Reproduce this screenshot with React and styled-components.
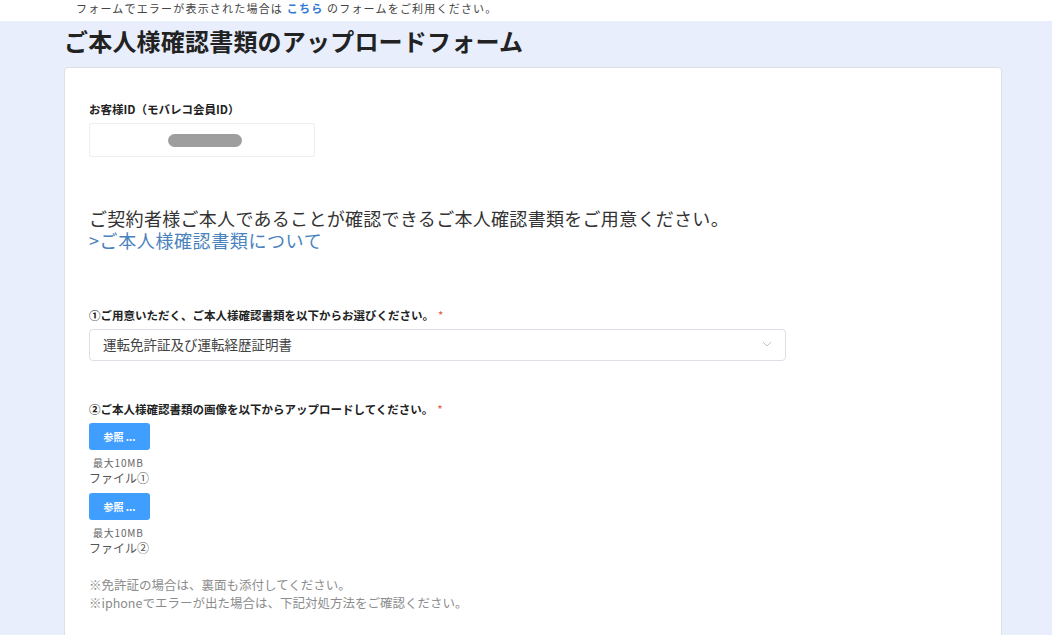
import styled, { createGlobalStyle } from "styled-components";

const GlobalStyle = createGlobalStyle`
  html, body {
    margin: 0;
    padding: 0;
    background: #e8eefc;
  }
  body {
    font-family: "Noto Sans CJK JP", "Noto Sans", sans-serif;
    color: #333;
  }
  * {
    box-sizing: border-box;
  }
`;

export default function App() {
  return (
    <>
      <GlobalStyle />
      <Notice>
        フォームでエラーが表示された場合は <a href="#">こちら</a> のフォームをご利用ください。
      </Notice>
      <Page>
        <Title>ご本人様確認書類のアップロードフォーム</Title>
        <Card>
          <Label>お客様ID（モバレコ会員ID）</Label>
          <IdBox>
            <Redacted />
          </IdBox>

          <Intro>
            <p>ご契約者様ご本人であることが確認できるご本人確認書類をご用意ください。</p>
            <a href="#">&gt;ご本人様確認書類について</a>
          </Intro>

          <Label $gap={56}>
            ①ご用意いただく、ご本人様確認書類を以下からお選びください。<Req>*</Req>
          </Label>
          <Select>
            <span>運転免許証及び運転経歴証明書</span>
            <svg width="10" height="6" viewBox="0 0 10 6">
              <path d="M1 1l4 4 4-4" fill="none" stroke="#c4c4c4" strokeWidth="1" />
            </svg>
          </Select>

          <Label $gap={40}>
            ②ご本人様確認書類の画像を以下からアップロードしてください。<Req>*</Req>
          </Label>
          {["ファイル①", "ファイル②"].map((name, i) => (
            <Upload key={name} $first={i === 0}>
              <Browse>参照 ...</Browse>
              <Size>最大10MB</Size>
              <FileName>{name}</FileName>
            </Upload>
          ))}

          <Notes>
            <p>※免許証の場合は、裏面も添付してください。</p>
            <p>※iphoneでエラーが出た場合は、下記対処方法をご確認ください。</p>
          </Notes>
        </Card>
      </Page>
    </>
  );
}

const Notice = styled.div`
  height: 21px;
  background: #fff;
  padding-left: 76px;
  font-size: 11px;
  line-height: 16px;
  letter-spacing: 1.2px;
  color: #444;

  a {
    color: #2f7ad3;
    font-weight: bold;
    text-decoration: none;
  }
`;

const Page = styled.main`
  padding: 0 50px 0 64px;
`;

const Title = styled.h1`
  margin: 0;
  height: 46px;
  padding-top: 4px;
  font-size: 24px;
  line-height: 32px;
  letter-spacing: 0.2px;
  font-weight: bold;
  color: #222;
`;

const Card = styled.section`
  background: #fff;
  border: 1px solid #dcdfe6;
  border-radius: 4px;
  padding: 33px 24px 80px;
`;

const Label = styled.div`
  margin-top: ${({ $gap }) => $gap || 0}px;
  font-size: 11.5px;
  line-height: 16px;
  font-weight: bold;
  color: #222;
`;

const Req = styled.span`
  color: #e05a3a;
  margin-left: 4px;
  font-weight: normal;
`;

const IdBox = styled.div`
  margin-top: 6px;
  width: 226px;
  height: 34px;
  border: 1px solid #eceef2;
  border-radius: 2px;
  display: flex;
  align-items: center;
  justify-content: center;
  padding-left: 6px;
`;

const Redacted = styled.div`
  width: 74px;
  height: 13px;
  border-radius: 7px;
  background: #9e9e9e;
  filter: blur(0.6px);
`;

const Intro = styled.div`
  margin-top: 50px;
  font-size: 18px;
  line-height: 22px;
  letter-spacing: 0.3px;

  p {
    margin: 0;
    color: #333;
  }

  a {
    color: #4a82bd;
    text-decoration: none;
    letter-spacing: 0.6px;
  }
`;

const Select = styled.div`
  margin-top: 6px;
  width: 697px;
  height: 32px;
  border: 1px solid #dcdfe6;
  border-radius: 4px;
  display: flex;
  align-items: center;
  justify-content: space-between;
  padding: 0 13px 2px 13px;
  font-size: 13.5px;
  line-height: 18px;
  color: #444;
`;

const Upload = styled.div`
  margin-top: ${({ $first }) => ($first ? 6 : 7)}px;
`;

const Browse = styled.button`
  display: block;
  width: 61px;
  height: 27px;
  border: none;
  border-radius: 3px;
  background: #409eff;
  color: #fff;
  font-family: inherit;
  font-size: 10px;
  font-weight: bold;
  padding: 0;
`;

const Size = styled.div`
  margin-top: 6px;
  padding-left: 4px;
  font-size: 10px;
  line-height: 14px;
  letter-spacing: 0.8px;
  color: #666;
`;

const FileName = styled.div`
  font-size: 12px;
  line-height: 16px;
  color: #555;
`;

const Notes = styled.div`
  margin-top: 20px;
  font-size: 12.5px;
  line-height: 18px;
  color: #8c8c8c;

  p {
    margin: 0;
  }
`;
